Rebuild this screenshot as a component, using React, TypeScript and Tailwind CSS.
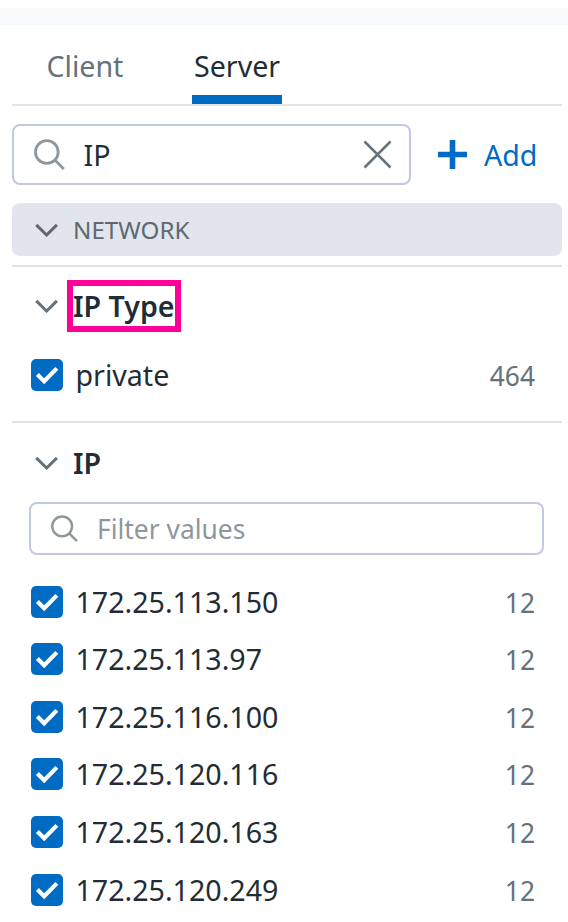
import type { ReactNode } from "react";

const ips = [
  { ip: "172.25.113.150", count: 12 },
  { ip: "172.25.113.97", count: 12 },
  { ip: "172.25.116.100", count: 12 },
  { ip: "172.25.120.116", count: 12 },
  { ip: "172.25.120.163", count: 12 },
  { ip: "172.25.120.249", count: 12 },
];

function Chevron({ className = "" }: { className?: string }) {
  return (
    <svg className={`h-[14px] w-6 shrink-0 ${className}`} viewBox="0 0 24 14" fill="none" stroke="currentColor" strokeWidth="3">
      <path d="M1.3 1.9 11.6 12 21.9 1.9" />
    </svg>
  );
}

function SearchIcon({ className }: { className: string }) {
  return (
    <svg className={`shrink-0 text-[#8f979d] ${className}`} viewBox="0 0 30 30" fill="none" stroke="currentColor" strokeWidth="2.7">
      <circle cx="12.4" cy="12.6" r="11" />
      <path d="m20.2 20.4 8.6 8.6" />
    </svg>
  );
}

function Checkbox() {
  return (
    <span className="flex size-8 shrink-0 items-center justify-center rounded-[5px] bg-[#006bc2]">
      <svg className="size-8" viewBox="0 0 32 32" fill="none" stroke="white" strokeWidth="4.2">
        <path d="m6.4 15.4 6.8 6.8L25.8 9.4" />
      </svg>
    </span>
  );
}

function ValueRow({ label, count }: { label: string; count: number }) {
  return (
    <div className="flex h-[57.6px] items-center pr-[33px] pl-[30.5px]">
      <Checkbox />
      <span className="ml-[13px] grow text-[28.6px] leading-8">{label}</span>
      <span className="pt-0.5 text-[26.4px] leading-8 text-[#66727a]">{count}</span>
    </div>
  );
}

function Divider() {
  return <div className="mr-1.5 ml-3 h-0.5 shrink-0 bg-[#e1e5ea]" />;
}

function SectionTitle({ children }: { children: ReactNode }) {
  return (
    <div className="flex h-[52px] items-center pl-[34.5px] text-[28.6px] font-semibold">
      <Chevron className="text-[#66727a]" />
      {children}
    </div>
  );
}

export default function App() {
  return (
    <div className="flex h-[922px] w-[568px] flex-col overflow-hidden bg-white font-['Noto_Sans',sans-serif] text-[#1f2d36]">
      <div className="mt-2 h-[17px] shrink-0 bg-[#f9fafc]" />
      <div className="flex h-[79px] shrink-0 pl-[46.5px] text-[28.6px] leading-[81px]">
        <div className="w-[145.5px] text-[#66727a]">Client</div>
        <div className="h-[79px] w-[90px] border-b-9 border-[#006bc2] pl-0.5">Server</div>
      </div>
      <Divider />
      <div className="mt-[18px] flex h-[61px] shrink-0 items-center pl-3 text-[28.6px]">
        <div className="flex h-full w-[399px] items-center rounded-lg border-2 border-[#c1c8e0] pr-[17px] pl-[19.5px]">
          <SearchIcon className="size-[31px]" />
          <span className="ml-[19px] grow pt-0.5">IP</span>
          <svg className="size-[29px]" viewBox="0 0 29 29" fill="none" stroke="#66727a" strokeWidth="2.5">
            <path d="m1.5 1.5 26 26m0-26-26 26" />
          </svg>
        </div>
        <svg className="ml-[27px] size-[29px]" viewBox="0 0 29 29" fill="none" stroke="#006bc2" strokeWidth="5.6">
          <path d="M14.5 0v29M0 14.5h29" />
        </svg>
        <span className="ml-[17px] pt-0.5 text-[#006bc2]">Add</span>
      </div>
      <div className="mt-[18px] mr-1.5 ml-3 flex h-[53px] shrink-0 items-center rounded-lg bg-[#e2e5ed] pl-[22.5px] text-[24.2px] text-[#5d6971]">
        <Chevron />
        <span className="ml-[14.5px] pt-0.5">NETWORK</span>
      </div>
      <div className="h-[9px] shrink-0" />
      <Divider />
      <div className="mt-[13px] shrink-0">
        <SectionTitle>
          <span className="ml-[8.5px] flex h-[52px] w-[114px] items-center border-6 border-[#ff0099] whitespace-nowrap">IP Type</span>
        </SectionTitle>
      </div>
      <div className="mt-[14px] shrink-0">
        <ValueRow label="private" count={464} />
      </div>
      <div className="h-[17.4px] shrink-0" />
      <Divider />
      <div className="mt-[14px] shrink-0">
        <SectionTitle>
          <span className="ml-[14.5px]">IP</span>
        </SectionTitle>
      </div>
      <div className="mt-[13px] mr-6 ml-[29px] flex h-[53px] shrink-0 items-center rounded-lg border-2 border-[#c1c8e0] pl-5 text-[26.4px] text-[#8f979d]">
        <SearchIcon className="size-[27px]" />
        <span className="ml-[19px] pt-0.5">Filter values</span>
      </div>
      <div className="mt-[17.8px] shrink-0">
        {ips.map((row) => (
          <ValueRow key={row.ip} label={row.ip} count={row.count} />
        ))}
      </div>
    </div>
  );
}
